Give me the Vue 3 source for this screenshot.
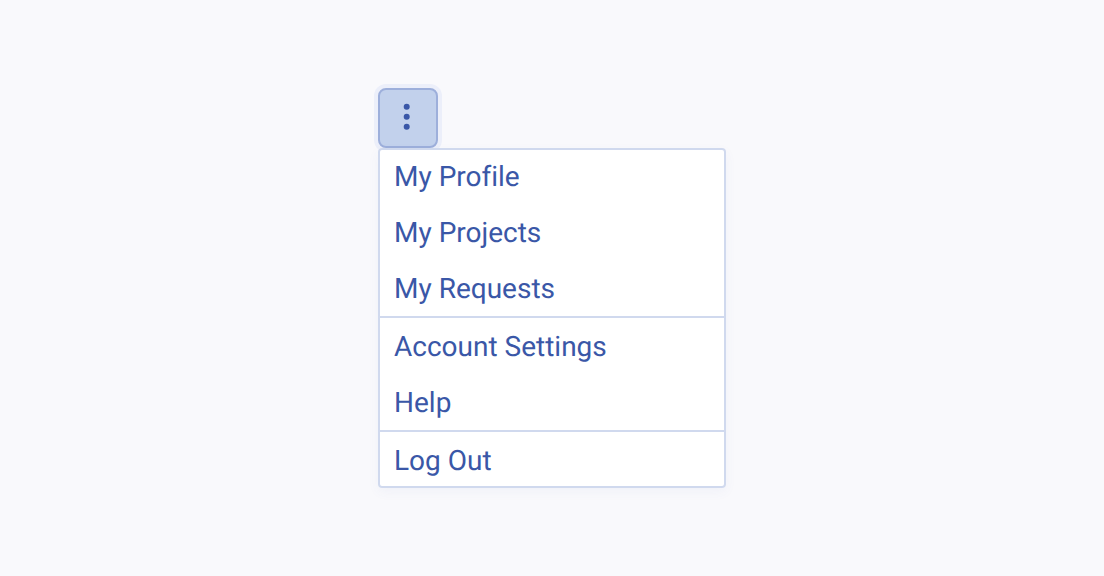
<template>
  <div class="page">
    <div class="dropdown">
      <button class="trigger" aria-label="Menu">
        <svg width="8" height="28" viewBox="0 0 8 28">
          <circle cx="2.7" cy="2.7" r="3" />
          <circle cx="2.7" cy="12.7" r="3" />
          <circle cx="2.7" cy="22.7" r="3" />
        </svg>
      </button>
      <div class="menu">
        <template v-for="(group, i) in groups" :key="i">
          <div v-if="i > 0" class="divider"></div>
          <a v-for="item in group" :key="item" href="#" class="menu-item" @click.prevent>{{ item }}</a>
        </template>
      </div>
    </div>
  </div>
</template>

<script setup>
const groups = [
  ['My Profile', 'My Projects', 'My Requests'],
  ['Account Settings', 'Help'],
  ['Log Out']
]
</script>

<style scoped>
.page {
  width: 1104px;
  height: 576px;
  box-sizing: border-box;
  padding: 88px 0 0 378px;
  background: #f9f9fc;
  font-family: Roboto, "Liberation Sans", sans-serif;
  font-variant-ligatures: none;
  text-rendering: geometricPrecision;
}

.dropdown {
  width: 348px;
}

.trigger {
  display: flex;
  align-items: center;
  justify-content: center;
  width: 60px;
  height: 60px;
  padding: 0;
  box-sizing: border-box;
  background: #c2d1ec;
  border: 2px solid #9dafdb;
  border-radius: 8px;
  box-shadow: 0 0 0 4px #eceffa;
  cursor: pointer;
}

.trigger svg {
  overflow: visible;
  fill: #3a57a7;
}

.menu {
  position: relative;
  display: flex;
  flex-direction: column;
  background: #fff;
  border-radius: 4px;
  box-shadow: inset 0 0 0 2px #d0d9ee, 0 4px 12px rgba(80, 100, 180, 0.05);
}

.menu-item {
  box-sizing: border-box;
  height: 56px;
  padding: 1px 16px 0;
  font-size: 28px;
  line-height: 56px;
  color: #3a57a7;
  text-decoration: none;
}

.divider {
  height: 2px;
  background: #d0d9ee;
}
</style>
